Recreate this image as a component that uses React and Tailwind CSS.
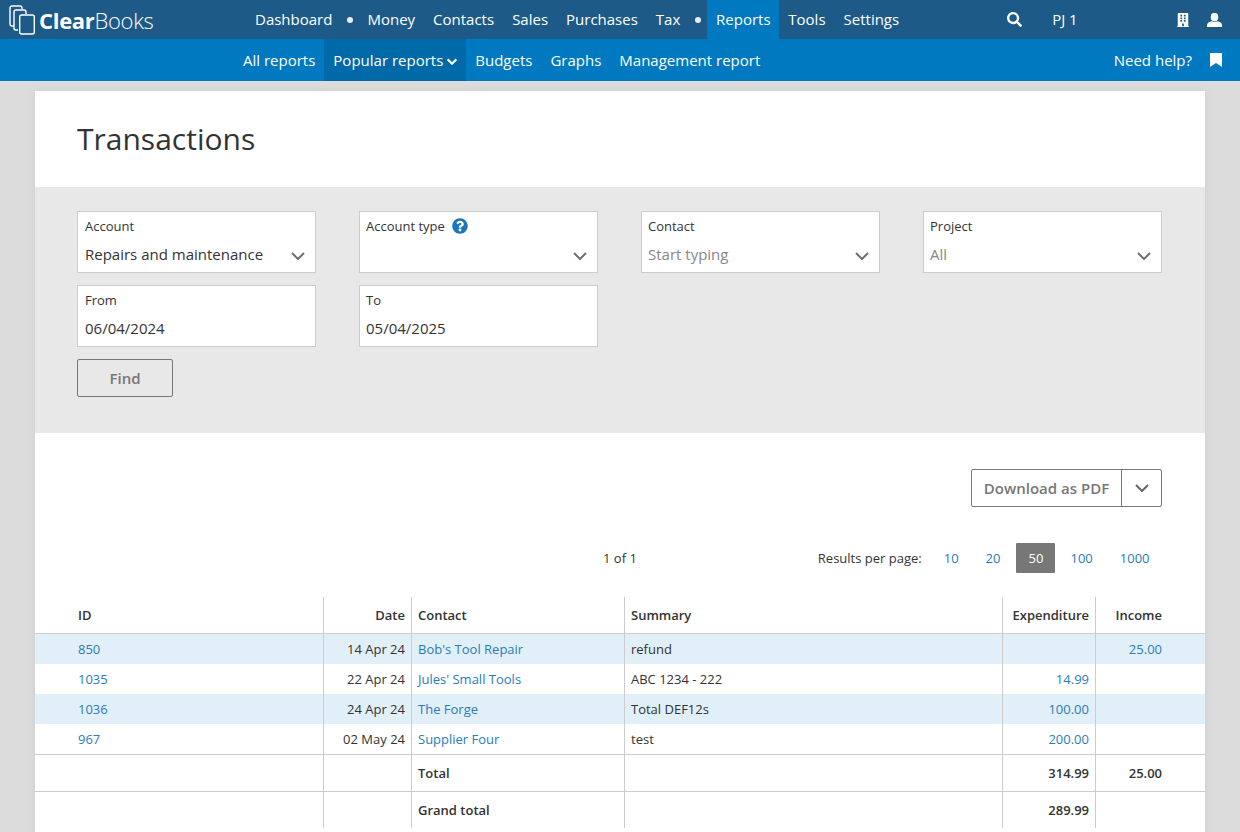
import React from 'react';
import { FaSearch, FaBuilding, FaQuestionCircle } from 'react-icons/fa';

const mainLinks = [
  { label: 'Dashboard' },
  { dot: 'w-[17px]' },
  { label: 'Money' },
  { label: 'Contacts' },
  { label: 'Sales' },
  { label: 'Purchases' },
  { label: 'Tax' },
  { dot: 'w-[18px]' },
  { label: 'Reports', active: true },
  { label: 'Tools' },
  { label: 'Settings' },
];

const rows = [
  { id: '850', date: '14 Apr 24', contact: "Bob's Tool Repair", summary: 'refund', expenditure: '', income: '25.00', shaded: true },
  { id: '1035', date: '22 Apr 24', contact: "Jules' Small Tools", summary: 'ABC 1234 - 222', expenditure: '14.99', income: '' },
  { id: '1036', date: '24 Apr 24', contact: 'The Forge', summary: 'Total DEF12s', expenditure: '100.00', income: '', shaded: true },
  { id: '967', date: '02 May 24', contact: 'Supplier Four', summary: 'test', expenditure: '200.00', income: '' },
];

const Chevron = ({ className = '', weight = 2 }) => (
  <svg viewBox="0 0 14 8" className={className} fill="none" stroke="currentColor" strokeWidth={weight}>
    <path d="M1 1l6 6 6-6" />
  </svg>
);

const Logo = () => (
  <div className="flex items-center w-[246px] pl-[9px]">
    <svg viewBox="0 0 26 30" className="w-[26px] h-[30px] text-white" fill="none" stroke="currentColor" strokeWidth="1.4">
      <path d="M5 21H3a2 2 0 0 1-2-2V3a2 2 0 0 1 2-2h8a2 2 0 0 1 2 2v1" />
      <path d="M9 25H7a2 2 0 0 1-2-2V7a2 2 0 0 1 2-2h8a2 2 0 0 1 2 2v2" />
      <rect x="10.7" y="10" width="14.6" height="19" rx="2" />
    </svg>
    <span className="ml-[4px] text-[22px] leading-none text-white tracking-[-0.3px]">
      <span className="font-bold">Clear</span>
      <span className="font-light">Books</span>
    </span>
  </div>
);

const Field = ({ label, value, placeholder, select, help, className = 'pl-[6px]' }) => (
  <div className={`relative h-[62px] bg-white border border-[#ccc] pt-[5px] ${className}`}>
    <div className="flex items-center text-[13px] leading-[18px] text-[#333]">
      {label}
      {help && <FaQuestionCircle className="ml-[7px] text-[16px] text-[#1a76bd]" />}
    </div>
    <div className={`mt-[9px] text-[15px] leading-[20px] ${placeholder ? 'text-[#888]' : 'text-[#333]'}`}>
      {value || placeholder || '\u00a0'}
    </div>
    {select && <Chevron className="absolute right-[10px] top-[40px] w-[14px] h-[8px] text-[#66707a]" />}
  </div>
);

const Th = ({ children, className = '' }) => (
  <th className={`h-[37px] px-[6px] pt-[2px] border-b border-[#ccc] text-[13px] font-semibold text-[#333] ${className}`}>
    {children}
  </th>
);

const Td = ({ children, className = '' }) => (
  <td className={`px-[6px] pt-[2px] text-[13px] ${className}`}>{children}</td>
);

const App = () => {
  return (
    <div className="h-[832px] overflow-hidden bg-[#dcdcdc] font-['Open_Sans',sans-serif] text-[#333]">
      <header className="flex h-[39px] bg-[#1d5a88] text-white text-[15px]">
        <Logo />
        <nav className="flex">
          {mainLinks.map((link, i) =>
            link.dot ? (
              <div key={i} className={`flex items-center justify-center ${link.dot}`}>
                <span className="w-[6px] h-[6px] rounded-full bg-[#e8eef3]" />
              </div>
            ) : (
              <a
                key={link.label}
                className={`flex items-center ${link.active ? 'w-[72px] justify-center bg-[#0079c1]' : 'px-[9px]'}`}
              >
                {link.label}
              </a>
            )
          )}
        </nav>
        <div className="flex items-center ml-[99px]">
          <FaSearch className="text-[15px]" />
          <span className="ml-[30px]">PJ 1</span>
          <FaBuilding className="ml-[98px] text-[14px]" />
          <svg viewBox="0 0 15 14" className="ml-[17px] w-[15px] h-[14px]" fill="currentColor">
            <ellipse cx="7.5" cy="4" rx="3.8" ry="4.2" />
            <path d="M0 14v-2c0-2 2-3.3 5-3.8 1.5.8 3.5.8 5 0 3 .5 5 1.8 5 3.8v2z" />
          </svg>
        </div>
      </header>

      <div className="flex h-[42px] bg-[#0079c1] text-white text-[15px] pl-[234px] pr-[18px]">
        <a className="flex items-center px-[9px]">All reports</a>
        <a className="flex items-center px-[9px] bg-[#006aa9]">
          Popular reports
          <Chevron className="ml-[4px] mt-[3px] w-[10px] h-[7px]" weight={3} />
        </a>
        <a className="flex items-center px-[9px]">Budgets</a>
        <a className="flex items-center px-[9px]">Graphs</a>
        <a className="flex items-center px-[9px]">Management report</a>
        <div className="ml-auto flex items-center">
          <span>Need help?</span>
          <svg viewBox="0 0 12 14" className="ml-[18px] w-[12px] h-[14px]" fill="currentColor">
            <path d="M0 0h12v14l-6-4-6 4z" />
          </svg>
        </div>
      </div>

      <main className="mx-[35px] mt-[10px] bg-white shadow-[0_0_6px_rgba(0,0,0,0.08)] h-[760px]">
        <div className="h-[96px] pl-[42px] pt-[26px]">
          <h1 className="text-[30px] leading-[44px] text-[#333]">Transactions</h1>
        </div>

        <section className="h-[246px] bg-[#e8e8e8] pl-[42px] pr-[43px] pt-[24px]">
          <div className="grid grid-cols-4 gap-x-[43px] gap-y-[12px]">
            <Field label="Account" value="Repairs and maintenance" select className="pl-[7px]" />
            <Field label="Account type" select help />
            <Field label="Contact" placeholder="Start typing" select />
            <Field label="Project" placeholder="All" select />
            <Field label="From" value="06/04/2024" className="pl-[7px]" />
            <Field label="To" value="05/04/2025" />
          </div>
          <button className="mt-[12px] w-[96px] h-[38px] rounded-[2px] border border-[#777] text-[15px] font-semibold text-[#777]">
            Find
          </button>
        </section>

        <div className="flex justify-end pr-[43px] pt-[36px]">
          <div className="flex h-[38px] rounded-[2px] border border-[#777] text-[#777]">
            <span className="flex items-center justify-center w-[149px] text-[15px] font-semibold whitespace-nowrap">Download as PDF</span>
            <span className="flex items-center justify-center w-[40px] border-l border-[#777]">
              <Chevron className="w-[14px] h-[8px] text-[#666]" />
            </span>
          </div>
        </div>

        <div className="flex items-center h-[30px] mt-[36px] text-[13px] text-[#333]">
          <span className="ml-[568px] pt-[2px]">1 of 1</span>
          <span className="ml-[181px] pt-[2px]">Results per page:</span>
          <div className="flex items-center ml-[22px] text-[#2b7bb9]">
            <a className="pt-[2px]">10</a>
            <a className="ml-[27px] pt-[2px]">20</a>
            <a className="ml-[16px] flex items-center justify-center w-[39px] h-[30px] pt-[2px] rounded-[1px] bg-[#777] text-white">50</a>
            <a className="ml-[15px] pt-[2px]">100</a>
            <a className="ml-[27px] pt-[2px]">1000</a>
          </div>
        </div>

        <table className="mt-[24px] w-[1170px] table-fixed border-separate border-spacing-0 text-[#333]">
          <colgroup>
            <col className="w-[288px]" />
            <col className="w-[88px]" />
            <col className="w-[213px]" />
            <col className="w-[378px]" />
            <col className="w-[93px]" />
            <col className="w-[110px]" />
          </colgroup>
          <thead>
            <tr>
              <Th className="pl-[43px] text-left">ID</Th>
              <Th className="border-l text-right">Date</Th>
              <Th className="border-l text-left">Contact</Th>
              <Th className="border-l text-left">Summary</Th>
              <Th className="border-l text-right">Expenditure</Th>
              <Th className="border-l text-right pr-[43px]">Income</Th>
            </tr>
          </thead>
          <tbody>
            {rows.map((row) => (
              <tr key={row.id} className={`h-[30px] ${row.shaded ? 'bg-[#e1eff8]' : ''}`}>
                <Td className="pl-[43px] text-[#2b7bb9]">{row.id}</Td>
                <Td className="border-l border-[#ccc] text-right">{row.date}</Td>
                <Td className="border-l border-[#ccc] text-[#2b7bb9]">{row.contact}</Td>
                <Td className="border-l border-[#ccc]">{row.summary}</Td>
                <Td className="border-l border-[#ccc] text-right text-[#2b7bb9]">{row.expenditure}</Td>
                <Td className="border-l border-[#ccc] text-right pr-[43px] text-[#2b7bb9]">{row.income}</Td>
              </tr>
            ))}
            <tr className="h-[37px] font-semibold">
              <Td className="border-t border-[#ccc]" />
              <Td className="border-t border-l border-[#ccc]" />
              <Td className="border-t border-l border-[#ccc]">Total</Td>
              <Td className="border-t border-l border-[#ccc]" />
              <Td className="border-t border-l border-[#ccc] text-right">314.99</Td>
              <Td className="border-t border-l border-[#ccc] text-right pr-[43px]">25.00</Td>
            </tr>
            <tr className="h-[37px] font-semibold">
              <Td className="border-t border-[#ccc]" />
              <Td className="border-t border-l border-[#ccc]" />
              <Td className="border-t border-l border-[#ccc]">Grand total</Td>
              <Td className="border-t border-l border-[#ccc]" />
              <Td className="border-t border-l border-[#ccc] text-right">289.99</Td>
              <Td className="border-t border-l border-[#ccc]" />
            </tr>
          </tbody>
        </table>
      </main>
    </div>
  );
};

export default App;
